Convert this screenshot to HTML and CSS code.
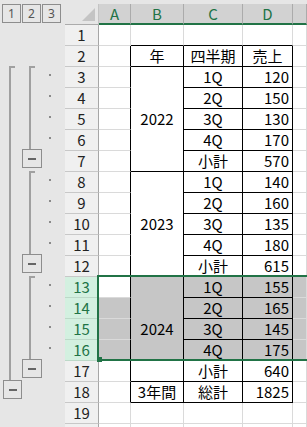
FILE: index.html
```html
<!DOCTYPE html>
<html lang="ja">
<head>
<meta charset="utf-8">
<link rel="stylesheet" href="styles.css">
</head>
<body>
<div class="app">
  <div class="outline">
    <div class="levels"><span class="lv">1</span><span class="lv">2</span><span class="lv">3</span></div>
    <div class="ogrid">
      <div class="sp2"></div>
      <div class="bar l1 s15"></div>
      <div class="btn k1"><i></i></div>
      <div class="sp2"></div>

      <div class="sp2"></div>
      <div class="bar l2 s4"></div>
      <div class="btn k2"><i></i></div>
      <div class="bar l2 s4"></div>
      <div class="btn k2"><i></i></div>
      <div class="bar l2 s4"></div>
      <div class="btn k2"><i></i></div>
      <div class="sp3"></div>

      <div></div><div></div>
      <div class="dot"></div><div class="dot"></div><div class="dot"></div><div class="dot"></div>
      <div></div>
      <div class="dot"></div><div class="dot"></div><div class="dot"></div><div class="dot"></div>
      <div></div>
      <div class="dot"></div><div class="dot"></div><div class="dot"></div><div class="dot"></div>
      <div></div><div></div><div></div><div></div>
    </div>
  </div>

  <div class="sheet">
    <div class="corner"></div>
    <div class="ch">A</div><div class="ch">B</div><div class="ch">C</div><div class="ch">D</div><div class="ch"></div>

    <div class="rh">1</div><div class="c"></div><div class="c tt"></div><div class="c tt"></div><div class="c tt"></div><div class="c"></div>
    <div class="rh">2</div><div class="c tl"></div><div class="c t ctr">年</div><div class="c t ctr">四半期</div><div class="c t ctr">売上</div><div class="c"></div>

    <div class="rh">3</div><div class="c tl"></div><div class="c t ctr m5">2022</div><div class="c t ctr">1Q</div><div class="c t r">120</div><div class="c"></div>
    <div class="rh">4</div><div class="c tl"></div><div class="c t ctr">2Q</div><div class="c t r">150</div><div class="c"></div>
    <div class="rh">5</div><div class="c tl"></div><div class="c t ctr">3Q</div><div class="c t r">130</div><div class="c"></div>
    <div class="rh">6</div><div class="c tl"></div><div class="c t ctr">4Q</div><div class="c t r">170</div><div class="c"></div>
    <div class="rh">7</div><div class="c tl"></div><div class="c t ctr">小計</div><div class="c t r">570</div><div class="c"></div>

    <div class="rh">8</div><div class="c tl"></div><div class="c t ctr m5">2023</div><div class="c t ctr">1Q</div><div class="c t r">140</div><div class="c"></div>
    <div class="rh">9</div><div class="c tl"></div><div class="c t ctr">2Q</div><div class="c t r">160</div><div class="c"></div>
    <div class="rh">10</div><div class="c tl"></div><div class="c t ctr">3Q</div><div class="c t r">135</div><div class="c"></div>
    <div class="rh">11</div><div class="c tl"></div><div class="c t ctr">4Q</div><div class="c t r">180</div><div class="c"></div>
    <div class="rh">12</div><div class="c tl"></div><div class="c t ctr">小計</div><div class="c t r">615</div><div class="c"></div>

    <div class="rh hs">13</div><div class="c tl"></div><div class="c t ctr m5 part">2024</div><div class="c t ctr sel">1Q</div><div class="c t r sel">155</div><div class="c sel"></div>
    <div class="rh hs">14</div><div class="c tl sel"></div><div class="c t ctr sel">2Q</div><div class="c t r sel">165</div><div class="c sel"></div>
    <div class="rh hs">15</div><div class="c tl sel"></div><div class="c t ctr sel">3Q</div><div class="c t r sel">145</div><div class="c sel"></div>
    <div class="rh hs">16</div><div class="c tl sel"></div><div class="c t ctr sel">4Q</div><div class="c t r sel">175</div><div class="c sel"></div>
    <div class="rh">17</div><div class="c tl"></div><div class="c t ctr">小計</div><div class="c t r">640</div><div class="c"></div>

    <div class="rh">18</div><div class="c tl"></div><div class="c t ctr">3年間</div><div class="c t ctr">総計</div><div class="c t r">1825</div><div class="c"></div>
    <div class="rh">19</div><div class="c"></div><div class="c"></div><div class="c"></div><div class="c"></div><div class="c"></div>
    <div class="rh"></div><div class="c"></div><div class="c"></div><div class="c"></div><div class="c"></div><div class="c"></div>

    <div class="selbox"><span class="handle"></span></div>
  </div>
</div>
</body>
</html>
```

FILE: styles.css
```css
* { box-sizing: border-box; }
html, body { margin: 0; padding: 0; }
body {
  width: 307px;
  height: 427px;
  overflow: hidden;
  background: #e6e6e6;
  font-family: "Noto Sans CJK JP", "Noto Sans", sans-serif;
}
.app { display: flex; height: 427px; }

/* outline area */
.outline { width: 65px; flex: none; display: flex; flex-direction: column; }
.levels { height: 25px; padding: 4px 0 0 2px; display: flex; gap: 1px; }
.lv {
  width: 19px; height: 19px;
  border: 1px solid #8d8d8d;
  display: flex; align-items: center; justify-content: center;
  font-family: "Noto Sans", sans-serif;
  font-size: 12px; color: #555;
  line-height: 1;
}
.ogrid {
  display: grid;
  grid-template-columns: 21px 22px 22px;
  grid-template-rows: repeat(20, 21px);
  grid-auto-flow: column;
}
.sp2 { grid-row: span 2; }
.sp3 { grid-row: span 3; }
.s4 { grid-row: span 4; }
.s15 { grid-row: span 15; }
.bar {
  margin-top: 1px;
  width: 6px;
  border-left: 2px solid #a0a0a0;
  border-top: 2px solid #a0a0a0;
}
.l1 { margin-left: 9px; }
.l2 { margin-left: 8px; }
.btn {
  height: 19px;
  border: 1px solid #8d8d8d;
  display: flex; align-items: center; justify-content: center;
}
.btn i { display: block; width: 8px; height: 2px; background: #666; }
.k1 { width: 19px; margin-left: 3px; }
.k2 { width: 20px; margin-left: 1px; }
.dot { position: relative; }
.dot::after {
  content: "";
  display: block;
  width: 2px; height: 2px;
  background: #8a8a8a;
  margin: 9px 0 0 6px;
}

/* sheet */
.sheet {
  flex: 1;
  position: relative;
  padding-top: 4px;
  display: grid;
  grid-template-columns: 34px 32px 53px 59px 50px 1fr;
  grid-template-rows: repeat(21, 21px);
  font-size: 15px;
  color: #000;
}
.corner {
  background: #e6e6e6;
  border-right: 1px solid #c4c4c4;
  border-bottom: 1px solid #ababab;
  position: relative;
}
.corner::after {
  content: "";
  position: absolute;
  right: 3px; bottom: 3px;
  width: 13px; height: 13px;
  background: #c4c4c4;
  clip-path: polygon(100% 0, 100% 100%, 0 100%);
}
.ch {
  background: #d2d2d2;
  border-right: 1px solid #ababab;
  border-bottom: 2px solid #217346;
  color: #217346;
  display: flex; align-items: center; justify-content: center;
  line-height: 19px;
}
.rh {
  background: #f0f0f0;
  border-right: 1px solid #a6a6a6;
  border-bottom: 1px solid #c8c8c8;
  display: flex; align-items: center; justify-content: center;
  color: #222;
  line-height: 20px;
}
.rh.hs { background: #d3f0e0; color: #217346; border-bottom-color: #bcd9c8; }

.c {
  background: #fff;
  border-right: 1px solid #dadada;
  border-bottom: 1px solid #dadada;
  display: flex; align-items: center;
  padding: 0 3px;
  line-height: 20px;
  white-space: nowrap;
}
.t { border-right-color: #000; border-bottom-color: #000; }
.tl { border-right-color: #000; }
.tt { border-bottom-color: #000; }
.ctr { justify-content: center; }
.r { justify-content: flex-end; }
.m5 { grid-row: span 5; }
.sel { background: #c6c6c6; }
.part { background: linear-gradient(#c6c6c6 0 83px, #fff 83px); }

.selbox {
  position: absolute;
  grid-row: 14 / 18;
  grid-column: 2 / -1;
  top: -2px; left: -2px; right: -10px; bottom: 0;
  border: 2px solid #217346;
  pointer-events: none;
}
.handle {
  position: absolute;
  left: -2px; bottom: -3px;
  width: 5px; height: 5px;
  background: #217346;
}
```
